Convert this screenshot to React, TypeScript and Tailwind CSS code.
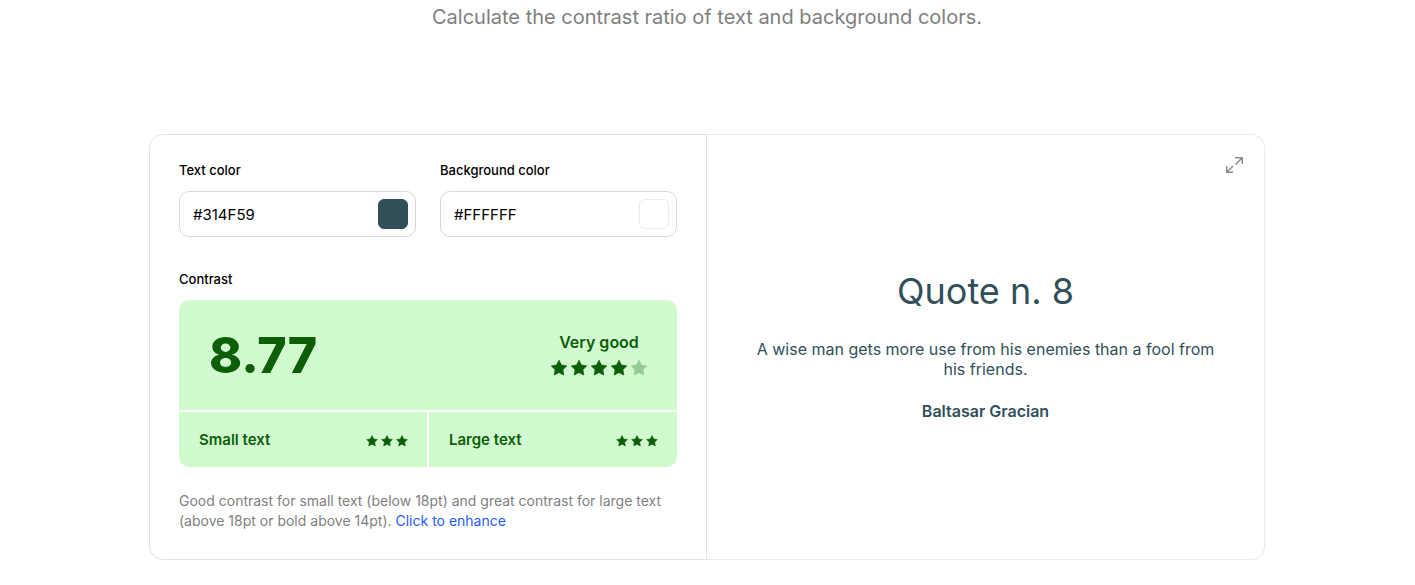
import { useState } from "react";

function Star({ className }: { className: string }) {
  return (
    <svg viewBox="0 0 20 20" className={className} fill="currentColor" stroke="currentColor" strokeWidth="0.8" strokeLinejoin="round" aria-hidden="true">
      <path d="M10 2.2l2.400 4.900 5.300.8-3.850 3.750.9 5.350L10 14.500 5.250 17l.9-5.350L2.300 7.900l5.300-.8z" />
    </svg>
  );
}

type FieldProps = {
  id: string;
  label: string;
  value: string;
  onChange: (value: string) => void;
  swatch: string;
};

function ColorField({ id, label, value, onChange, swatch }: FieldProps) {
  return (
    <div className="min-w-0 flex-1">
      <label htmlFor={id} className="block text-[13px] leading-[14px] font-medium">
        {label}
      </label>
      <div className="mt-3.5 flex items-center rounded-[10px] border border-[#d8d8da] py-[7px] pr-[7px] pl-[13px]">
        <input
          id={id}
          value={value}
          onChange={(e) => onChange(e.target.value)}
          className="min-w-0 flex-1 bg-transparent pt-0.5 text-[15px] leading-5 outline-none"
        />
        <button
          type="button"
          aria-label={`Pick ${label.toLowerCase()}`}
          className={`size-[30px] rounded-md border ${swatch}`}
          style={{ backgroundColor: value }}
        />
      </div>
    </div>
  );
}

function SizeRating({ label }: { label: string }) {
  return (
    <div className="flex items-center justify-between bg-[#d1fbcf] py-[17px] pr-[18px] pl-5">
      <span className="text-[15px] leading-[21px] font-semibold">{label}</span>
      <span className="flex gap-px pt-0.5">
        {[0, 1, 2].map((n) => (
          <Star key={n} className="size-3.5" />
        ))}
      </span>
    </div>
  );
}

export default function App() {
  const [text, setText] = useState("#314F59");
  const [background, setBackground] = useState("#FFFFFF");

  return (
    <main className="bg-white pr-px font-[Inter,sans-serif] text-black">
      <p className="px-4 pt-1 text-center text-xl leading-[26px] text-[#7f7f7f]">
        Calculate the contrast ratio of text and background colors.
      </p>
      <div className="mx-auto mt-[104px] mb-6 grid max-w-[1116px] grid-cols-2">
        <section className="min-w-0 rounded-l-[14px] border border-[#e2e2e3] px-[29px] py-7">
          <div className="flex gap-6">
            <ColorField id="text-color" label="Text color" value={text} onChange={setText} swatch="border-[#314f59]" />
            <ColorField id="background-color" label="Background color" value={background} onChange={setBackground} swatch="border-[#ebebeb]" />
          </div>
          <h2 className="mt-[35px] text-[13px] leading-[14px] font-medium">Contrast</h2>
          <div className="mt-3.5 flex flex-col gap-0.5 overflow-hidden rounded-[10px] text-[#0c5f07]">
            <div className="flex items-center justify-between bg-[#d1fbcf] py-[25px] pr-7 pl-[30px]">
              <strong className="text-[50px] leading-[60px] font-extrabold">8.77</strong>
              <div className="flex flex-col items-center pb-0.5">
                <span className="text-base leading-6 font-semibold">Very good</span>
                <span className="mt-1 flex">
                  {[0, 1, 2, 3, 4].map((n) => (
                    <Star key={n} className={n < 4 ? "size-5" : "size-5 opacity-30"} />
                  ))}
                </span>
              </div>
            </div>
            <div className="grid grid-cols-2 gap-0.5">
              <SizeRating label="Small text" />
              <SizeRating label="Large text" />
            </div>
          </div>
          <p className="mt-6 text-sm leading-5 text-[#7f7f7f]">
            Good contrast for small text (below 18pt) and great contrast for large text (above 18pt or bold above 14pt).{" "}
            <a href="#enhance" className="text-[#1f5cff]">Click to enhance</a>
          </p>
        </section>
        <section className="relative flex min-w-0 flex-col items-center justify-center rounded-r-[14px] border border-l-0 border-[#ebebeb] px-12 pb-1 text-center text-[#314f59]">
          <button type="button" aria-label="Full screen" className="absolute top-5 right-5 text-[#8b8b8b]">
            <svg viewBox="0 0 20 20" className="size-5" fill="none" stroke="currentColor" strokeWidth="1.5">
              <path d="M11 2.750h7M18.250 2v7M18 3l-6.500 6.500M2.750 11v7M2 17.250h7M3 17l6-6" />
            </svg>
          </button>
          <h1 className="text-4xl leading-[44px]">Quote n. 8</h1>
          <p className="mt-[26px] text-base leading-5">A wise man gets more use from his enemies than a fool from his friends.</p>
          <p className="mt-[22px] text-base leading-5 font-semibold">Baltasar Gracian</p>
        </section>
      </div>
    </main>
  );
}
